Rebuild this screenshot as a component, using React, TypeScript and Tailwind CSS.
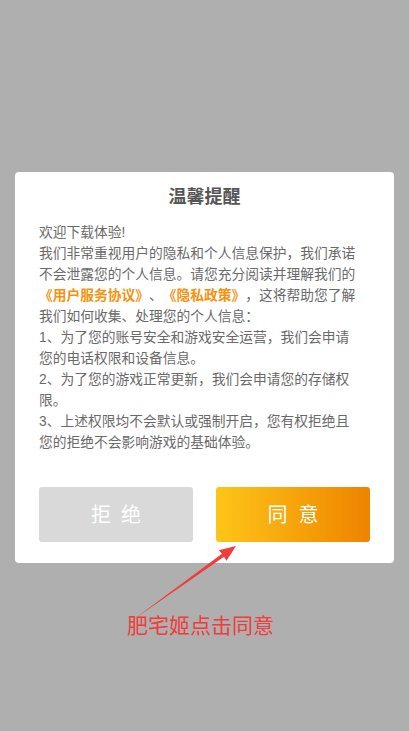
import React from "react";

const font = { fontFamily: '"Liberation Sans", "Noto Sans CJK SC", sans-serif' };

export default function App() {
  return (
    <div
      className="relative w-[409px] h-[731px] bg-[#afafaf] overflow-hidden flex flex-col [text-spacing-trim:space-all]"
      style={font}
    >
      <div className="mt-[172px] mx-[15px] bg-white rounded-[4px] px-[24px] pt-[13px] pb-[21px] flex flex-col">
        <div className="text-center text-[18px] leading-[24px] font-bold text-[#555555]">温馨提醒</div>
        <div className="mt-[13px] w-[320px] text-[13.75px] leading-[21px] text-[#6a6a6a] [text-spacing-trim:space-all]">
          <p>欢迎下载体验!</p>
          <p>
            我们非常重视用户的隐私和个人信息保护，我们承诺不会泄露您的个人信息。请您充分阅读并理解我们的
            <span className="text-[#f5930f] font-bold">《用户服务协议》</span>、
            <span className="text-[#f5930f] font-bold">《隐私政策》</span>，这将帮助您了解我们如何收集、处理您的个人信息：
          </p>
          <p>1、为了您的账号安全和游戏安全运营，我们会申请您的电话权限和设备信息。</p>
          <p>2、为了您的游戏正常更新，我们会申请您的存储权限。</p>
          <p>3、上述权限均不会默认或强制开启，您有权拒绝且您的拒绝不会影响游戏的基础体验。</p>
        </div>
        <div className="mt-[34px] flex gap-[23px]">
          <div className="flex-1 h-[55px] rounded-[3px] bg-[#d9d9d9] flex items-center justify-center gap-[10px] text-white text-[20px]">
            <span>拒</span>
            <span>绝</span>
          </div>
          <div className="flex-1 h-[55px] rounded-[3px] bg-gradient-to-r from-[#fdc517] to-[#ee8300] flex items-center justify-center gap-[11px] text-white text-[20px]">
            <span>同</span>
            <span>意</span>
          </div>
        </div>
      </div>
      <div className="mt-[50px] pl-[127px] text-[21px] leading-[26px] text-[#f23b3b]">肥宅姬点击同意</div>
      <svg
        className="absolute left-0 top-0 pointer-events-none"
        width="409"
        height="731"
        viewBox="0 0 409 731"
      >
        <polygon
          points="133.5,619.5 224,556.8 226.5,560.8 236,546 218.8,550.2 222,553.8"
          fill="#f23b3b"
        />
      </svg>
    </div>
  );
}
